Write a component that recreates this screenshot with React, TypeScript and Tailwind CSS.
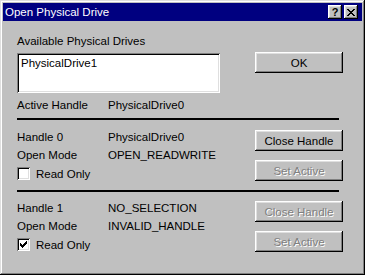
import type { ReactNode } from "react";

const raised =
  "shadow-[inset_-1px_-1px_#000,inset_1px_1px_#fff,inset_-2px_-2px_#808080,inset_2px_2px_#dfdfdf]";
const sunken =
  "shadow-[inset_1px_1px_#808080,inset_-1px_-1px_#fff,inset_2px_2px_#000,inset_-2px_-2px_#dfdfdf]";

function Button({ children, disabled }: { children: ReactNode; disabled?: boolean }) {
  return (
    <button
      className={`flex h-[21px] w-[88px] items-center justify-center bg-[#c0c0c0] leading-[12px] ${raised} ${
        disabled ? "text-[#808080] [text-shadow:1px_1px_0_#fff]" : "text-black"
      }`}
    >
      {children}
    </button>
  );
}

function Checkbox({ checked }: { checked?: boolean }) {
  return (
    <span className={`flex h-[13px] w-[13px] items-center justify-center bg-white ${sunken}`}>
      {checked && (
        <svg width="7" height="7" viewBox="0 0 7 7" shapeRendering="crispEdges">
          <path
            d="M6 0h1v1h-1z M5 1h2v1h-2z M0 2h1v1h-1z M4 2h3v1h-3z M0 3h2v1h-2z M3 3h3v1h-3z M0 4h5v1h-5z M1 5h3v1h-3z M2 6h1v1h-1z"
            fill="#000"
          />
        </svg>
      )}
    </span>
  );
}

function Row({ label, value, className = "" }: { label: string; value: string; className?: string }) {
  return (
    <div className={`flex h-[12px] items-center leading-[12px] ${className}`}>
      <span className="w-[91px]">{label}</span>
      <span>{value}</span>
    </div>
  );
}

interface HandleSectionProps {
  index: number;
  name: string;
  mode: string;
  readOnly: boolean;
  active: boolean;
  pad: string;
}

function HandleSection({ index, name, mode, readOnly, active, pad }: HandleSectionProps) {
  return (
    <div className={`flex h-[70px] w-[326px] items-start justify-between ${pad}`}>
      <div className="flex flex-col">
        <Row label={`Handle ${index}`} value={name} className="mt-[1px]" />
        <Row label="Open Mode" value={mode} className="mt-[6px]" />
        <label className="mt-[6px] flex items-center gap-[6px] leading-[12px]">
          <Checkbox checked={readOnly} />
          Read Only
        </label>
      </div>
      <div className="flex flex-col gap-[9px]">
        <Button disabled={!active}>Close Handle</Button>
        <Button disabled>Set Active</Button>
      </div>
    </div>
  );
}

export default function App() {
  return (
    <div
      className={`flex h-[275px] w-[365px] flex-col bg-[#c0c0c0] p-[3px] text-[11.5px] text-black font-['Liberation_Sans',Arial,sans-serif] ${
        "shadow-[inset_-1px_-1px_#000,inset_1px_1px_#dfdfdf,inset_-2px_-2px_#808080,inset_2px_2px_#fff]"
      }`}
    >
      <div className="flex h-[18px] items-center justify-between bg-[#000080] pl-[2px] pr-[4px] text-white">
        <span className="leading-[12px]">Open Physical Drive</span>
        <div className="flex gap-[2px]">
          <span
            className={`flex h-[14px] w-[14px] items-center justify-center bg-[#c0c0c0] text-[11px] font-bold leading-none text-black ${raised}`}
          >
            ?
          </span>
          <span className={`flex h-[14px] w-[14px] items-center justify-center bg-[#c0c0c0] ${raised}`}>
            <svg width="8" height="7" viewBox="0 0 8 7" shapeRendering="crispEdges">
              <path
                d="M0 0h2v1h-2z M6 0h2v1h-2z M1 1h2v1h-2z M5 1h2v1h-2z M2 2h4v1h-4z M3 3h2v1h-2z M2 4h4v1h-4z M1 5h2v1h-2z M5 5h2v1h-2z M0 6h2v1h-2z M6 6h2v1h-2z"
                fill="#000"
              />
            </svg>
          </span>
        </div>
      </div>

      <div className="flex flex-1 flex-col pl-[14px] pt-[14px]">
        <div className="flex w-[326px] items-start justify-between">
          <div className="flex flex-col">
            <span className="h-[12px] leading-[12px]">Available Physical Drives</span>
            <div className={`mt-[6px] h-[40px] w-[203px] bg-white px-[4px] pt-[4px] leading-[12px] ${sunken}`}>
              PhysicalDrive1
            </div>
          </div>
          <div className="mt-[17px]">
            <Button>OK</Button>
          </div>
        </div>

        <Row label="Active Handle" value="PhysicalDrive0" className="mt-[6px]" />

        <div className="mt-[7px] h-[2px] w-[322px] bg-black" />
        <HandleSection
          index={0}
          name="PhysicalDrive0"
          mode="OPEN_READWRITE"
          readOnly={false}
          active
          pad="pt-[10px]"
        />
        <div className="h-[2px] w-[322px] bg-black" />
        <HandleSection
          index={1}
          name="NO_SELECTION"
          mode="INVALID_HANDLE"
          readOnly
          active={false}
          pad="pt-[9px]"
        />
      </div>
    </div>
  );
}
